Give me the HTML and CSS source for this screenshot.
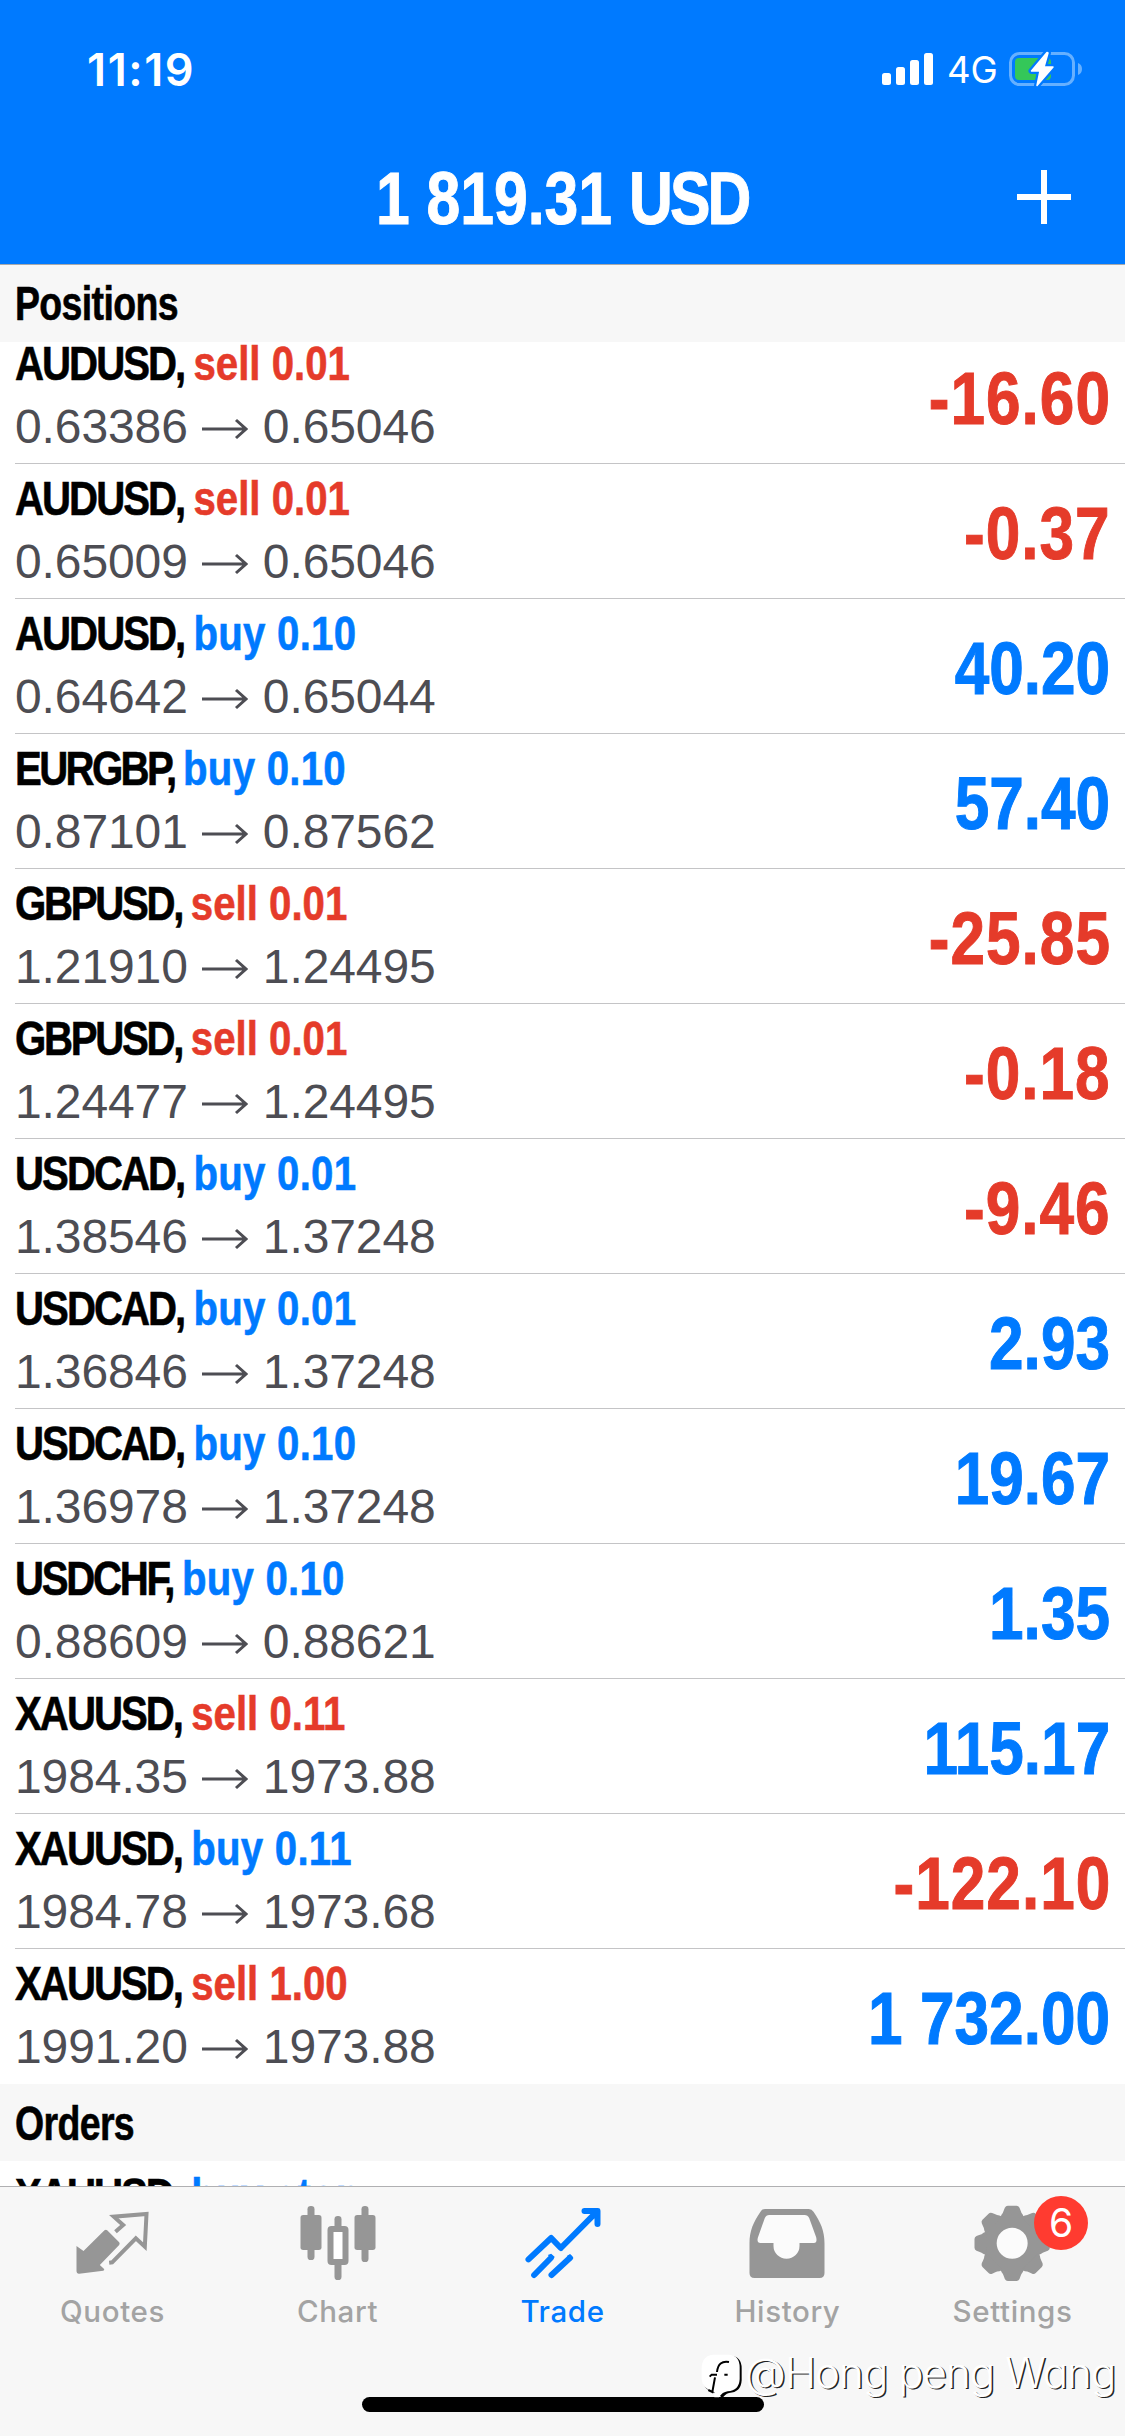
FILE: index.html
```html
<!DOCTYPE html>
<html lang="en">
<head>
<meta charset="utf-8">
<title>Trade</title>
<link rel="stylesheet" href="styles.css">
</head>
<body>
<div class="app">
  <header class="header">
    <div class="status">
      <span class="time">11:19</span>
      <div class="status-right">
        <svg class="signal" width="51" height="34" viewBox="0 0 51 34" fill="#fff"><rect y="21" width="9" height="12" rx="2.5"/><rect x="14" y="15" width="9" height="18" rx="2.5"/><rect x="28" y="8" width="9" height="25" rx="2.5"/><rect x="42" y="1" width="9" height="32" rx="2.5"/></svg>
        <span class="net">4G</span>
        <svg class="battery" width="74" height="38" viewBox="0 0 74 38"><rect x="1.5" y="3.5" width="63" height="31" rx="9" fill="none" stroke="#66b0ff" stroke-width="3"/><path d="M69 13q4 1.500 4 6t-4 6z" fill="#66b0ff"/><rect x="6" y="8" width="36" height="22" rx="4" fill="#34c759"/><path d="M38 2.500L22.500 21h8.500L28 35.500 44 17h-9l4-14z" fill="#fff" stroke="#007aff" stroke-width="6" stroke-linejoin="round"/><path d="M38 2.500L22.500 21h8.500L28 35.500 44 17h-9l4-14z" fill="#fff" stroke="#fff" stroke-width="1.500" stroke-linejoin="round"/></svg>
      </div>
    </div>
    <div class="titlebar">
      <h1 class="title">1 819.31 <span class="cur">USD</span></h1>
      <svg class="plus" width="54" height="54" viewBox="0 0 54 54" fill="#fff"><path d="M24 0h6v24h24v6H30v24h-6V30H0v-6h24z"/></svg>
    </div>
  </header>
  <main class="content">
    <h2 class="section first"><span>Positions</span></h2>
    <ul class="list scrolled">
      <li class="row"><div><p class="name"><span class="sym">AUDUSD, </span><span class="sell">sell 0.01</span></p><p class="price">0.63386<svg class="arrow" viewBox="0 0 46 22"><path d="M0 11h44M34 2l10 9-10 9"/></svg>0.65046</p></div><b class="profit neg">-16.60</b></li>
      <li class="row"><div><p class="name"><span class="sym">AUDUSD, </span><span class="sell">sell 0.01</span></p><p class="price">0.65009<svg class="arrow" viewBox="0 0 46 22"><path d="M0 11h44M34 2l10 9-10 9"/></svg>0.65046</p></div><b class="profit neg">-0.37</b></li>
      <li class="row"><div><p class="name"><span class="sym">AUDUSD, </span><span class="buy">buy 0.10</span></p><p class="price">0.64642<svg class="arrow" viewBox="0 0 46 22"><path d="M0 11h44M34 2l10 9-10 9"/></svg>0.65044</p></div><b class="profit">40.20</b></li>
      <li class="row"><div><p class="name"><span class="sym tight">EURGBP, </span><span class="buy">buy 0.10</span></p><p class="price">0.87101<svg class="arrow" viewBox="0 0 46 22"><path d="M0 11h44M34 2l10 9-10 9"/></svg>0.87562</p></div><b class="profit">57.40</b></li>
      <li class="row"><div><p class="name"><span class="sym snug">GBPUSD, </span><span class="sell">sell 0.01</span></p><p class="price">1.21910<svg class="arrow" viewBox="0 0 46 22"><path d="M0 11h44M34 2l10 9-10 9"/></svg>1.24495</p></div><b class="profit neg">-25.85</b></li>
      <li class="row"><div><p class="name"><span class="sym snug">GBPUSD, </span><span class="sell">sell 0.01</span></p><p class="price">1.24477<svg class="arrow" viewBox="0 0 46 22"><path d="M0 11h44M34 2l10 9-10 9"/></svg>1.24495</p></div><b class="profit neg">-0.18</b></li>
      <li class="row"><div><p class="name"><span class="sym">USDCAD, </span><span class="buy">buy 0.01</span></p><p class="price">1.38546<svg class="arrow" viewBox="0 0 46 22"><path d="M0 11h44M34 2l10 9-10 9"/></svg>1.37248</p></div><b class="profit neg">-9.46</b></li>
      <li class="row"><div><p class="name"><span class="sym">USDCAD, </span><span class="buy">buy 0.01</span></p><p class="price">1.36846<svg class="arrow" viewBox="0 0 46 22"><path d="M0 11h44M34 2l10 9-10 9"/></svg>1.37248</p></div><b class="profit">2.93</b></li>
      <li class="row"><div><p class="name"><span class="sym">USDCAD, </span><span class="buy">buy 0.10</span></p><p class="price">1.36978<svg class="arrow" viewBox="0 0 46 22"><path d="M0 11h44M34 2l10 9-10 9"/></svg>1.37248</p></div><b class="profit">19.67</b></li>
      <li class="row"><div><p class="name"><span class="sym snug">USDCHF, </span><span class="buy">buy 0.10</span></p><p class="price">0.88609<svg class="arrow" viewBox="0 0 46 22"><path d="M0 11h44M34 2l10 9-10 9"/></svg>0.88621</p></div><b class="profit">1.35</b></li>
      <li class="row"><div><p class="name"><span class="sym">XAUUSD, </span><span class="sell">sell 0.11</span></p><p class="price">1984.35<svg class="arrow" viewBox="0 0 46 22"><path d="M0 11h44M34 2l10 9-10 9"/></svg>1973.88</p></div><b class="profit">115.17</b></li>
      <li class="row"><div><p class="name"><span class="sym">XAUUSD, </span><span class="buy">buy 0.11</span></p><p class="price">1984.78<svg class="arrow" viewBox="0 0 46 22"><path d="M0 11h44M34 2l10 9-10 9"/></svg>1973.68</p></div><b class="profit neg">-122.10</b></li>
      <li class="row"><div><p class="name"><span class="sym">XAUUSD, </span><span class="sell">sell 1.00</span></p><p class="price">1991.20<svg class="arrow" viewBox="0 0 46 22"><path d="M0 11h44M34 2l10 9-10 9"/></svg>1973.88</p></div><b class="profit">1 732.00</b></li>
    </ul>
    <h2 class="section orders"><span>Orders</span></h2>
    <ul class="list">
      <li class="row"><div><p class="name"><span class="sym">XAUUSD, </span><span class="buy">buy stop</span></p></div></li>
    </ul>
  </main>
  <nav class="tabs">
    <a class="tab"><svg class="icon" viewBox="202.5 480 270 270"><path d="M228 618l21 15 63-62q4-3 8 0l36 36q3 4 0 8l-58 60 12 11q4 4-2 6l-72 9q-8 1-8-7z" fill="#969696"/><path d="M345 575l23-20-28-25 98-8-5 98-27-25-71 72-9 1" fill="none" stroke="#969696" stroke-width="12"/></svg><span>Quotes</span></a>
    <a class="tab"><svg class="icon" viewBox="877.5 480 270 270" fill="#969696"><rect x="900" y="525" width="63" height="105" rx="8"/><rect x="921" y="498" width="21" height="162" rx="10"/><rect x="1062" y="525" width="63" height="105" rx="8"/><rect x="1083" y="498" width="21" height="168" rx="10"/><rect x="1002" y="528" width="21" height="50" rx="10"/><rect x="1002" y="660" width="21" height="60" rx="10"/><rect x="990" y="567" width="45" height="99" rx="3" fill="#fff" stroke="#969696" stroke-width="18"/></svg><span>Chart</span></a>
    <a class="tab active"><svg class="icon" viewBox="112.5 60 270 270" fill="none" stroke="#007aff" stroke-width="18" stroke-linecap="round" stroke-linejoin="round"><path d="M144 238L212 174 241 204 350 94M312 93H351V132"/><path d="M342 86h16v16z" fill="#007aff" stroke="none"/><path d="M161 285L211 234M213 285L268 234"/><path d="M202 225l10-4 11 10-8 8zM259 228l10-6 10 12-8 8z" fill="#007aff" stroke="none"/></svg><span>Trade</span></a>
    <a class="tab"><svg class="icon" viewBox="787.5 60 270 270"><path d="M854 87H985Q994 87 999 95C1020 126 1032 151 1032 190V279Q1032 294 1017 294H822Q807 294 807 279V190C807 151 819 126 840 95Q845 87 854 87Z" fill="#969696"/><path d="M866 105H972Q982 105 986 114L1007 172Q1011 189 1000 189H957V198A39 38 0 0 1 879 198V189H840Q828 189 832 173L853 114Q857 105 866 105Z" fill="#fbfbfb"/></svg><span>History</span></a>
    <a class="tab"><svg class="icon" viewBox="427.500 60 270 270"><defs><path id="tooth" d="M-36-76L-32-86Q-27-91-25-99L-22-107Q-19-113-13-113H13Q19-113 22-107L25-99Q27-91 32-86L36-76Z"/></defs><g transform="translate(560 190)" fill="#969696"><circle r="67" fill="#fbfbfb" stroke="#969696" stroke-width="41"/><use href="#tooth"/><use href="#tooth" transform="rotate(45)"/><use href="#tooth" transform="rotate(90)"/><use href="#tooth" transform="rotate(135)"/><use href="#tooth" transform="rotate(180)"/><use href="#tooth" transform="rotate(225)"/><use href="#tooth" transform="rotate(270)"/><use href="#tooth" transform="rotate(315)"/></g></svg><span>Settings</span><i class="badge">6</i></a>
  </nav>
  <div class="home"></div>
  <div class="watermark"><svg width="44" height="48" viewBox="0 0 132 144"><path d="M38 2H84Q118 4 118 40V76Q116 112 80 114Q66 118 60 132Q56 120 36 114Q4 106 2 76V40Q4 4 38 2Z" fill="#000" transform="translate(4 3)"/><path d="M38 2H84Q116 4 116 40V76Q114 110 80 112Q64 114 54 130H40V114Q4 106 2 76V40Q4 4 38 2Z" fill="#fff"/><path d="M84 24Q52 18 48 54M26 68L32 62H48M70 62H80M42 70L34 114L22 108" fill="none" stroke="#000" stroke-width="6"/></svg><span>@Hong peng Wang</span></div>
</div>
</body>
</html>
```
FILE: styles.css
```css
* { box-sizing: border-box; margin: 0; padding: 0; }
body { background: #fff; font-family: "Liberation Sans", Arial, sans-serif; }
.app { position: relative; width: 1125px; height: 2436px; overflow: hidden; display: flex; flex-direction: column; }

.header { height: 265px; flex: none; background: #007aff; border-bottom: 1px solid #a7a9ac; color: #fff; position: relative; z-index: 2; }
.status { height: 142px; display: flex; justify-content: space-between; padding: 0 42px 0 87px; font-family: "Inter", sans-serif; }
.time { font-size: 45px; font-weight: 600; line-height: 60px; padding-top: 40px; letter-spacing: 1.6px; }
.status-right { display: flex; align-items: flex-start; padding-top: 52px; }
.net { font-size: 36.5px; line-height: 36px; margin: 0 14px 0 14px; width: 48px; }
.battery { margin-top: -2px; }
.titlebar { position: relative; display: grid; justify-items: center; }
.title { font-size: 74px; font-weight: 700; line-height: 80px; margin-top: 17px; white-space: pre; transform: scaleX(.82); -webkit-text-stroke: 1px; }
.cur { letter-spacing: -3.5px; }
.plus { position: absolute; left: 1017px; top: 28px; }

.content { flex: 1; min-height: 0; overflow: hidden; }
.section { position: relative; z-index: 1; height: 77px; background: #f7f7f7; padding: 10px 0 0 15px; font-size: 48px; line-height: 58px; font-weight: 700; letter-spacing: -.8px; -webkit-text-stroke: .6px; }
.section.orders { padding-top: 11px; }
.section span { display: inline-block; transform: scaleX(.78); transform-origin: 0 0; }
.list { list-style: none; }
.scrolled { margin-top: -13px; }
.row { height: 135px; margin-left: 15px; padding: 6px 15px 0 0; display: flex; justify-content: space-between; border-bottom: 1px solid #c4c4c6; }
.row:last-child { border-bottom-color: transparent; }
.name { font-size: 49px; line-height: 56px; font-weight: 700; white-space: pre; transform: scaleX(.82); transform-origin: 0 0; width: 500px; -webkit-text-stroke: .6px; }
.sym { letter-spacing: -2.4px; }
.sym.snug { letter-spacing: -2.8px; }
.sym.tight { letter-spacing: -3.2px; }
.sell { letter-spacing: 0; color: #e53b2a; }
.buy { letter-spacing: .3px; color: #007aff; }
.price { margin-top: 8px; font-size: 48px; line-height: 56px; letter-spacing: -.1px; color: #4d4d53; display: flex; align-items: center; }
.arrow { width: 46px; height: 22px; margin: 4px 15px 0 14px; fill: none; stroke: #4d4d53; stroke-width: 3; }
.profit { font-size: 74px; line-height: 127px; color: #007aff; white-space: pre; transform: scaleX(.84); transform-origin: 100% 0; -webkit-text-stroke: 1px; }
.profit.neg { color: #e53b2a; letter-spacing: 1.2px; margin-right: -1px; }

.tabs { height: 250px; flex: none; background: #f7f7f7; border-top: 1px solid #b0b0b2; display: grid; grid-template-columns: repeat(5, 1fr); position: relative; }
.tab { position: relative; padding-top: 13px; display: flex; flex-direction: column; align-items: center; font-family: "Inter", sans-serif; font-size: 29.5px; font-weight: 500; line-height: 36px; letter-spacing: .6px; color: #a3a3a3; }
.tab.active { color: #007aff; }
.tab span { margin-top: 3px; }
.icon { width: 90px; height: 90px; }
.badge { position: absolute; left: 134px; top: 9px; width: 54px; height: 54px; border-radius: 50%; background: #ff3b30; color: #fff; font-style: normal; font-weight: 400; font-size: 39px; line-height: 54px; text-align: center; letter-spacing: 0; }
.home { position: absolute; left: 362px; top: 2397px; width: 402px; height: 15px; border-radius: 8px; background: #000; }
.watermark { position: absolute; left: 701px; top: 2354px; display: flex; color: #fff; font-family: "Inter", sans-serif; font-weight: 300; font-size: 42px; line-height: 38px; letter-spacing: -.9px; white-space: pre; text-shadow: 1.5px 1px 0 #222; font-feature-settings: "cv11"; }
```
